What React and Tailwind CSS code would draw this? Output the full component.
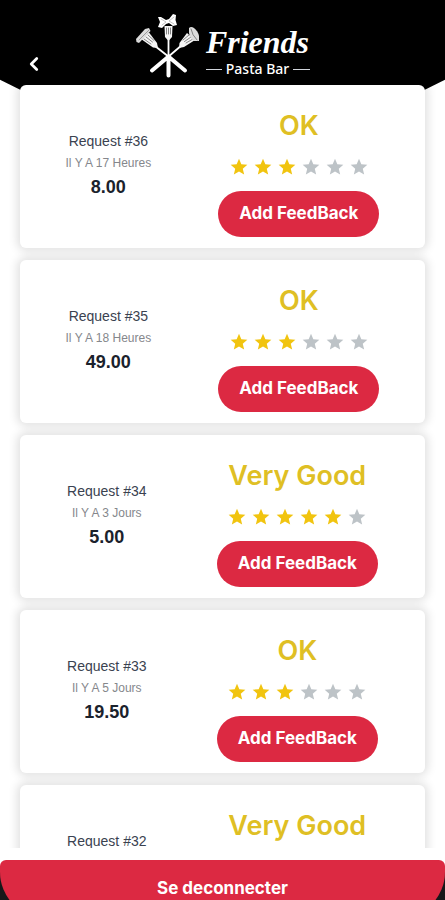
import React from 'react';
import { MdStar } from 'react-icons/md';
import { FiChevronLeft } from 'react-icons/fi';

const requests = [
    { id: 36, date: 'Il Y A 17 Heures', total: '8.00', label: 'OK', stars: 3 },
    { id: 35, date: 'Il Y A 18 Heures', total: '49.00', label: 'OK', stars: 3 },
    { id: 34, date: 'Il Y A 3 Jours', total: '5.00', label: 'Very Good', stars: 5 },
    { id: 33, date: 'Il Y A 5 Jours', total: '19.50', label: 'OK', stars: 3 },
    { id: 32, date: 'Il Y A 6 Jours', total: '12.00', label: 'Very Good', stars: 5 },
];

const Logo = () => (
    <div className="flex items-start gap-1">
        <svg viewBox="0 0 66 66" className="w-[66px] h-[66px]" fill="none" strokeLinecap="round" aria-hidden="true">
            {/* Handles */}
            <g stroke="#fff">
                <path d="M19 33 L33 44 M46 32 L32 44 M32.5 26 V44" strokeWidth="1.8" />
                <path d="M33 44 L49 57.5 M32 44 L16 57.5 M32.5 44 V62.5" strokeWidth="4" />
            </g>
            {/* Fork heads */}
            <g fill="#f4f4f4">
                <path d="M5 26 L13 19.5 L21 30 L22 35 L17 34.5 Z" />
                <path d="M51 20 L59 27 L48 34 L43 35 L43.5 30 Z" />
                <path d="M28.5 13 H36.5 L36 24 L32.5 28 L29 24 Z" />
            </g>
            <g stroke="#777" strokeWidth="0.9">
                <path d="M8 26 L15 31 M10 24 L16.5 29 M12 22 L18 27.5" />
                <path d="M57 26 L50 30 M55 24 L48.5 28.5 M53 22 L47 27" />
                <path d="M30.5 15 V21 M32.5 15 V21 M34.5 15 V21" />
            </g>
            {/* Penne, shell and farfalle */}
            <path d="M0 26 L9 16 L13 15 L14.5 18 L3 30 L0.5 29 Z" fill="#dcdcdc" />
            <path d="M3 27 L13 17" stroke="#8a8a8a" strokeWidth="0.8" />
            <path d="M53 15 Q55 13 58 15 Q62 18 63 23 L63 28 L58 28 Q54 25 53 20 Z" fill="#dcdcdc" />
            <path d="M55 16 Q56 22 61 27" stroke="#777" strokeWidth="0.9" />
            <path d="M22 4 L25 4 L30 7 L33 6 L37 1 L40 2 L39.5 7 L41 12 L37 13 L33 10 L30 11 L26 15 L22 14 L24 9 Z" fill="#fff" />
            <path d="M25 6 L30 9 L26 12 M38 4 L33 8 L38 11" stroke="#aaa" strokeWidth="0.7" />
        </svg>
        <div className="w-[104px] pt-[11px] text-center text-white">
            <div className="text-[32px] leading-[37px] font-bold italic font-['Liberation_Serif',serif]">Friends</div>
            <div className="flex items-center gap-1 text-sm leading-4 font-medium font-['Noto_Sans',sans-serif]">
                <span className="h-px flex-1 bg-gray-300"></span>
                Pasta Bar
                <span className="h-px flex-1 bg-gray-300"></span>
            </div>
        </div>
    </div>
);

const Stars = ({ count }) => (
    <div className="flex gap-1" role="img" aria-label={`${count} / 6`}>
        {[1, 2, 3, 4, 5, 6].map((n) => (
            <MdStar key={n} size={20} className={n <= count ? 'text-[#f1c40f]' : 'text-[#bdc3c7]'} />
        ))}
    </div>
);

const RequestCard = ({ request }) => (
    <li className="flex shrink-0 items-center justify-around rounded-md bg-white px-3 pt-6 pb-[11px] shadow-[0_0_10px_3px_rgba(0,0,0,0.12)]">
        <div className="pb-4 text-center font-['Liberation_Sans',sans-serif]">
            <p className="text-sm leading-[22px] text-[#3a4250]">Request #{request.id}</p>
            <p className="text-xs leading-[22px] text-[#85878c]">{request.date}</p>
            <p className="text-lg leading-[26px] font-bold text-[#1b222c]">{request.total}</p>
        </div>
        <div className="flex flex-col items-center gap-[14px]">
            <h2 className="text-[27px] leading-[34px] font-semibold text-[#dfbf24]">{request.label}</h2>
            <Stars count={request.stars} />
            <button type="button" className="h-[46px] rounded-full bg-[#dc2942] px-[21px] text-[17px] font-bold text-white">
                Add FeedBack
            </button>
        </div>
    </li>
);

const App = () => {
    return (
        <div className="relative isolate flex h-screen flex-col overflow-hidden bg-white font-['Inter',sans-serif]">
            {/* Black pointed backdrop behind the header and the first card */}
            <div className="absolute inset-x-0 top-0 -z-10 h-[190px] bg-black [clip-path:polygon(0_0,100%_0,100%_42%,50%_100%,0_42%)]"></div>

            <header className="grid h-[85px] shrink-0 grid-cols-[1fr_auto_1fr] pt-[13px]">
                <button type="button" aria-label="Retour" className="ml-5 mt-[37px] size-7 text-white">
                    <FiChevronLeft size={22} strokeWidth={3} className="mx-auto" />
                </button>
                <Logo />
            </header>

            <main className="min-h-0 flex-1 overflow-hidden">
                <ul className="flex flex-col gap-3 px-5">
                    {requests.map((request) => (
                        <RequestCard key={request.id} request={request} />
                    ))}
                </ul>
            </main>

            <footer className="mt-3 h-10 shrink-0 overflow-hidden bg-linear-to-b from-white from-30% to-[#16181a] to-30%">
                <button type="button" className="h-[58px] w-full rounded-t-md rounded-b-[46px] bg-[#dc2942] text-[17px] font-bold text-white">
                    Se deconnecter
                </button>
            </footer>
        </div>
    );
};

export default App;
